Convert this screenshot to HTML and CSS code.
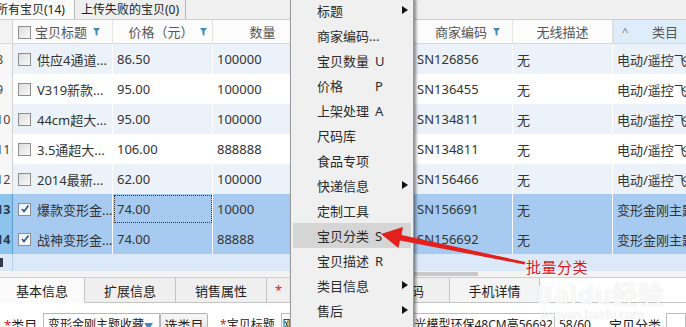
FILE: index.html
```html
<!DOCTYPE html>
<html>
<head>
<meta charset="utf-8">
<link rel="stylesheet" href="styles.css">
</head>
<body>
<div class="page">
  <div class="toptabs">
    <div class="ttab active">所有宝贝(14)</div>
    <div class="ttab">上传失败的宝贝(0)</div>
  </div>

  <div class="grid">
    <div class="row head">
      <div class="num"></div>
      <div class="hc"><span class="cb"></span><span class="ht">宝贝标题</span><svg class="flt" viewBox="0 0 7 8"><path d="M0 0H7L4.5 3.2V8L2.5 6.6V3.2Z"/></svg></div>
      <div class="hc"><span class="ht">价格（元）</span><svg class="flt" viewBox="0 0 7 8"><path d="M0 0H7L4.5 3.2V8L2.5 6.6V3.2Z"/></svg></div>
      <div class="hc center"><span class="ht">数量</span></div>
      <div class="hc center"><span class="ht">上架</span></div>
      <div class="hc"><span class="ht">商家编码</span><svg class="flt" viewBox="0 0 7 8"><path d="M0 0H7L4.5 3.2V8L2.5 6.6V3.2Z"/></svg></div>
      <div class="hc center"><span class="ht">无线描述</span></div>
      <div class="hc sorted"><span class="sort">^</span><span class="ht">类目</span></div>
    </div>

    <div class="row alt">
      <div class="num"><span>8</span></div>
      <div class="c t"><span class="cb"></span>供应4通道...</div>
      <div class="c">86.50</div><div class="c">100000</div><div class="c"></div>
      <div class="c">SN126856</div><div class="c">无</div><div class="c">电动/遥控飞机</div>
    </div>
    <div class="row">
      <div class="num"><span>9</span></div>
      <div class="c t"><span class="cb"></span>V319新款...</div>
      <div class="c">95.00</div><div class="c">100000</div><div class="c"></div>
      <div class="c">SN136455</div><div class="c">无</div><div class="c">电动/遥控飞机</div>
    </div>
    <div class="row alt">
      <div class="num"><span>10</span></div>
      <div class="c t"><span class="cb"></span>44cm超大...</div>
      <div class="c">95.00</div><div class="c">100000</div><div class="c"></div>
      <div class="c">SN134811</div><div class="c">无</div><div class="c">电动/遥控飞机</div>
    </div>
    <div class="row">
      <div class="num"><span>11</span></div>
      <div class="c t"><span class="cb"></span>3.5通超大...</div>
      <div class="c">106.00</div><div class="c">888888</div><div class="c"></div>
      <div class="c">SN134811</div><div class="c">无</div><div class="c">电动/遥控飞机</div>
    </div>
    <div class="row alt">
      <div class="num"><span>12</span></div>
      <div class="c t"><span class="cb"></span>2014最新...</div>
      <div class="c">62.00</div><div class="c">100000</div><div class="c"></div>
      <div class="c">SN156466</div><div class="c">无</div><div class="c">电动/遥控飞机</div>
    </div>
    <div class="row sel">
      <div class="num"><span>13</span></div>
      <div class="c t"><span class="cb on"><svg viewBox="0 0 10 10"><path d="M2 5L4 7.5L8.5 1.5"/></svg></span>爆款变形金...</div>
      <div class="c focus">74.00</div><div class="c">10000</div><div class="c"></div>
      <div class="c">SN156691</div><div class="c">无</div><div class="c">变形金刚主题收藏</div>
    </div>
    <div class="row sel">
      <div class="num"><span>14</span></div>
      <div class="c t"><span class="cb on"><svg viewBox="0 0 10 10"><path d="M2 5L4 7.5L8.5 1.5"/></svg></span>战神变形金...</div>
      <div class="c">74.00</div><div class="c">88888</div><div class="c"></div>
      <div class="c">SN156692</div><div class="c">无</div><div class="c">变形金刚主题收藏</div>
    </div>
    <div class="newrow"><div class="num"><i></i></div></div>
    <div class="hscroll"><div class="thumb"></div></div>
  </div>

  <div class="btabs">
    <div class="btab active">基本信息</div>
    <div class="btab">扩展信息</div>
    <div class="btab">销售属性</div>
    <div class="btab wide"><span class="req">*</span><span>宝贝编码</span></div>
    <div class="btab">手机详情</div>
  </div>

  <div class="form">
    <span class="lbl lbl1"><span class="req">*</span>类目</span>
    <div class="select"><span class="sv">变形金刚主题收藏</span><span class="dd">▼</span></div>
    <div class="btn">选类目</div>
    <span class="lbl lbl2"><span class="req">*</span>宝贝标题</span>
    <div class="input title"><span>变形金刚主题收藏擎天柱声光灯光模型环保48CM高56692</span></div>
    <span class="count">58/60</span>
    <span class="lbl lbl3">宝贝分类</span>
    <div class="input cat"></div>
  </div>

  <div class="watermark">
    <div class="wm1">Baidu经验</div>
    <div class="wm2">jingyan.baidu.com</div>
  </div>

  <div class="menu">
    <div class="mi"><span class="ml">标题</span><span class="arr"></span></div>
    <div class="mi"><span class="ml">商家编码...</span></div>
    <div class="mi"><span class="ml">宝贝数量</span><span class="key">U</span></div>
    <div class="mi"><span class="ml">价格</span><span class="key">P</span></div>
    <div class="mi"><span class="ml">上架处理</span><span class="key">A</span></div>
    <div class="mi"><span class="ml">尺码库</span></div>
    <div class="mi"><span class="ml">食品专项</span></div>
    <div class="mi"><span class="ml">快递信息</span><span class="arr"></span></div>
    <div class="mi"><span class="ml">定制工具</span></div>
    <div class="mi hl"><span class="ml">宝贝分类</span><span class="key">S</span></div>
    <div class="mi"><span class="ml">宝贝描述</span><span class="key">R</span></div>
    <div class="mi"><span class="ml">类目信息</span><span class="arr"></span></div>
    <div class="mi"><span class="ml">售后</span><span class="arr"></span></div>
  </div>

  <svg class="arrow" viewBox="0 0 686 327" width="686" height="327">
    <polygon points="381,234 403,227 401.5,235 525.5,262 524.5,264.5 400,240.5 398.5,248" fill="#e3201c"/>
  </svg>
  <div class="note">批量分类</div>
</div>
</body>
</html>
```

FILE: styles.css
```css
* { box-sizing: border-box; }
html, body { margin: 0; padding: 0; }
body {
  width: 686px;
  height: 327px;
  overflow: hidden;
  background: #fff;
  font-family: "Noto Sans", "Noto Sans CJK SC", sans-serif;
  font-size: 13px;
  color: #333;
}
.page {
  position: relative;
  width: 686px;
  height: 327px;
  overflow: hidden;
}

/* top tabs */
.toptabs {
  height: 20px;
  background: #f0f0f0;
  border-bottom: 1px solid #cfcfcf;
  display: flex;
  margin-left: -6px;
}
.ttab {
  font-size: 12px;
  line-height: 19px;
  padding: 0 4px 0 2px;
  border-right: 1px solid #b9b9b9;
  color: #222;
  background: #efefef;
}
.ttab.active { background: #fbfbfb; width: 81px; }
.ttab:nth-child(2) { width: 111px; padding-left: 6px; }

/* grid */
.row {
  display: grid;
  grid-template-columns: 13px repeat(7, 100px);
  height: 30px;
  align-items: stretch;
}
.row.head {
  height: 24px;
  background: #fcfcfc;
  border-bottom: 1px solid #d9d9d9;
  color: #555;
}
.num {
  background: #f3f3f3;
  border-right: 1px solid #d2d2d2;
  overflow: hidden;
  display: flex;
  align-items: center;
  font-size: 12.5px;
  color: #444;
}
.num span { margin-left: -4px; }
.hc {
  display: flex;
  align-items: center;
  justify-content: center;
  border-right: 1px solid #e4e4e4;
  position: relative;
  padding: 0 4px;
}
.hc .cb { position: absolute; left: 5px; top: 6px; }
.hc .ht { margin-left: 10px; }
.hc .flt { width: 7px; height: 8px; fill: #3f8db3; margin-left: 6px; }
.hc.center .ht { margin-left: 0; }
.hc.sorted { background: #deedf9; justify-content: flex-start; border-left: 1px solid #c8dff2; }
.hc.sorted .sort { color: #777; font-size: 11px; margin-left: 4px; width: 26px; }
.hc.sorted .ht { margin-left: 0; padding-left: 4px; }

.c {
  display: flex;
  align-items: center;
  padding-left: 4px;
  border-right: 1px solid #fff;
  white-space: nowrap;
  overflow: hidden;
  color: #333;
}
.c.t { padding-left: 5px; }
.c.t .cb { margin-right: 6px; }
.row.alt { background: #ecf2f9; }
.row:not(.head):not(.sel) .num { background: #f7f7f7; }
.row.sel { background: #a7cbf0; }
.row.sel .num {
  background: #8dc4ec;
  border-right: 1px solid #5d9fd3;
  font-weight: bold;
  color: #2c3b4c;
}
.c.focus { outline: 1px dotted #333; outline-offset: -2px; }

.cb {
  width: 13px;
  height: 13px;
  border: 1px solid #8e8e8e;
  background: linear-gradient(135deg, #dcdcdc, #fafafa);
  display: inline-flex;
  align-items: center;
  justify-content: center;
  flex: none;
}
.cb.on { background: linear-gradient(135deg, #e6eef8, #fff); }
.cb svg { width: 10px; height: 10px; fill: none; stroke: #2d4f86; stroke-width: 1.6; }

.newrow {
  height: 17px;
  background: #dbe9f8;
  display: grid;
  grid-template-columns: 13px 1fr;
}
.newrow .num { background: #dbe9f8; border-right: 1px solid #b8cfe6; }
.newrow .num i { display: block; width: 3px; height: 9px; background: #333c47; }
.hscroll {
  height: 6px;
  background: #f3f3f3;
  position: relative;
}
.hscroll .thumb {
  position: absolute;
  left: 300px;
  top: 1px;
  width: 178px;
  height: 4px;
  background: #c9c9c9;
}

/* bottom tabs */
.btabs {
  display: flex;
  height: 26px;
  border-top: 1px solid #cfcfcf;
  border-bottom: 1px solid #c4c4c4;
  background: #fff;
}
.btab {
  width: 91px;
  display: flex;
  align-items: center;
  justify-content: center;
  background: #efefef;
  border-right: 1px solid #c4c4c4;
  border-bottom: 1px solid #c4c4c4;
  margin-bottom: -1px;
  color: #222;
  font-size: 13px;
}
.btab.active { width: 85px; background: #fbfbfb; border-bottom-color: #fbfbfb; }
.btab.wide { width: 183px; justify-content: space-between; padding: 0 25px 0 8px; }
.btab:last-child { width: 90px; background: #f4f4f4; }
.req { color: #e0201c; }

/* form row */
.form {
  position: relative;
  height: 24px;
  margin-top: 10px;
  display: flex;
  align-items: flex-start;
  font-size: 13px;
  color: #222;
}
.lbl { white-space: nowrap; line-height: 22px; margin-top: 1px; }
.lbl1 { margin-left: 4px; width: 39px; }
.select {
  position: relative;
  width: 117px;
  height: 24px;
  border: 1px solid #b8b8b8;
  background: #fff;
  padding-left: 4px;
  line-height: 22px;
  font-size: 12px;
  white-space: nowrap;
  overflow: hidden;
}
.select .sv { display: block; width: 97px; overflow: hidden; }
.select .dd {
  position: absolute;
  right: 6px;
  top: 2px;
  color: #3f86c2;
  font-size: 9px;
  line-height: 22px;
}
.btn {
  width: 48px;
  height: 24px;
  border: 1px solid #b3b3b3;
  border-radius: 2px;
  background: linear-gradient(#f7f7f7, #e3e3e3);
  text-align: center;
  line-height: 22px;
}
.lbl2 { margin-left: 12px; width: 61px; font-size: 12px; }
.input {
  height: 24px;
  border: 1px solid #bcbcbc;
  background: #fff;
  overflow: hidden;
  white-space: nowrap;
  line-height: 22px;
}
.input.title { width: 274px; display: flex; justify-content: flex-end; font-size: 12px; padding-right: 1px; }
.count { margin-left: 4px; width: 50px; line-height: 22px; margin-top: 1px; font-size: 12px; }
.lbl3 { width: 57px; }
.input.cat { flex: 1; }

/* watermark */
.watermark {
  position: absolute;
  left: 536px;
  top: 280px;
  color: rgba(255, 255, 255, 0.85);
  text-shadow: 0 0 1px rgba(140,140,140,0.35);
  pointer-events: none;
}
.wm1 { font-size: 25px; font-weight: bold; line-height: 28px; letter-spacing: 1px; }
.wm2 { font-size: 12px; line-height: 14px; margin-left: 4px; }

/* context menu */
.menu {
  position: absolute;
  left: 290px;
  top: -3px;
  width: 124px;
  height: 335px;
  background: #f0f0f0;
  border: 1px solid #9a9a9a;
  box-shadow: 2px 2px 3px rgba(0,0,0,0.45);
  padding: 0 2px;
}
.mi {
  height: 25px;
  display: flex;
  align-items: center;
  position: relative;
  padding-left: 24px;
  color: #2b2b2b;
  font-size: 13px;
}
.mi.hl { background: #d5d5d5; }
.ml { min-width: 58px; white-space: nowrap; }
.key { font-size: 13px; }
.arr {
  position: absolute;
  left: 109px;
  top: 8px;
  width: 0;
  height: 0;
  border-top: 4.5px solid transparent;
  border-bottom: 4.5px solid transparent;
  border-left: 6px solid #111;
}

/* annotation */
.arrow { position: absolute; left: 0; top: 0; pointer-events: none; }
.note {
  position: absolute;
  left: 526px;
  top: 257px;
  font-size: 15px;
  line-height: 20px;
  color: #d11a1e;
  letter-spacing: 0.5px;
  text-shadow: 0 0 2px #fff;
}
```
